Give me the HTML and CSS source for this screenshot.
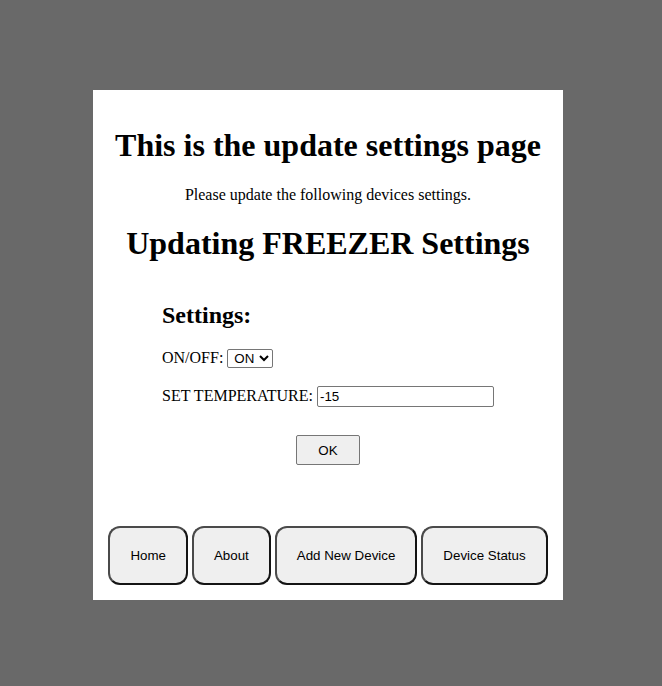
FILE: index.html
```html
<!DOCTYPE html>
<html>
<head>
<meta charset="utf-8">
<title>Update Settings</title>
<link rel="stylesheet" href="styles.css">
</head>
<body>
<div class="page">
  <div class="card">
    <h1 class="title">This is the update settings page</h1>
    <p class="intro">Please update the following devices settings.</p>
    <h1 class="subtitle">Updating FREEZER Settings</h1>
    <div class="form-wrap">
      <form class="settings">
        <h2>Settings:</h2>
        <p class="row">ON/OFF: <select class="select"><option>ON</option><option>OFF</option></select></p>
        <p class="row row-temp">SET TEMPERATURE: <input class="text" type="text" value="-15"></p>
        <div class="actions"><button type="button" class="ok">OK</button></div>
      </form>
    </div>
    <nav class="nav">
      <button type="button" class="nav-btn">Home</button>
      <button type="button" class="nav-btn">About</button>
      <button type="button" class="nav-btn">Add New Device</button>
      <button type="button" class="nav-btn">Device Status</button>
    </nav>
  </div>
</div>
</body>
</html>
```
FILE: styles.css
```css
html, body {
  margin: 0;
  padding: 0;
  background: #696969;
}
body {
  font-family: "Liberation Serif", "Times New Roman", serif;
  font-size: 16px;
  color: #000;
}
.page {
  padding: 90px 0 86px 93px;
}
.card {
  width: 470px;
  background: #fff;
  text-align: center;
  padding: 16px 0 15px;
}
.card h1 {
  font-size: 32px;
  font-weight: bold;
}
.title {
  margin: 21px 0 0;
}
.intro {
  margin: 21.5px 0 0;
}
.subtitle {
  margin: 21.5px 0 21.44px;
}
.form-wrap {
  text-align: center;
}
.settings {
  display: inline-block;
  text-align: left;
  margin: 0;
}
.settings h2 {
  font-size: 24px;
  font-weight: bold;
  margin: 19px 0 19.92px;
}
.row {
  margin: 16px 0;
}
.row-temp {
  margin-top: 18px;
}
.select {
  font-family: "Liberation Sans", Arial, sans-serif;
  font-size: 13.333px;
  height: 19px;
  width: 46px;
  border: 1px solid #767676;
  border-radius: 2px;
  background: #fff;
  color: #000;
  padding: 0 0 0 2px;
  vertical-align: baseline;
}
.text {
  font-family: "Liberation Sans", Arial, sans-serif;
  font-size: 13.333px;
  box-sizing: border-box;
  width: 177px;
  height: 21px;
  padding: 1px 2px;
  border: 1px solid #767676;
  border-radius: 2px;
  color: #000;
}
.actions {
  text-align: center;
  margin-top: 28px;
}
.ok {
  font-family: "Liberation Sans", Arial, sans-serif;
  font-size: 13.333px;
  width: 64px;
  height: 30px;
  padding: 0;
  background: #efefef;
  border: 1px solid #767676;
  border-radius: 2px;
  color: #000;
}
.nav {
  display: flex;
  justify-content: center;
  gap: 4px;
  margin-top: 61px;
}
.nav-btn {
  font-family: "Liberation Sans", Arial, sans-serif;
  font-size: 13.333px;
  padding: 20px;
  background: #efefef;
  color: #000;
  border-width: 2px;
  border-style: solid;
  border-color: #4a4a4a #141414 #141414 #4a4a4a;
  border-radius: 12px;
  line-height: 15px;
}
```
